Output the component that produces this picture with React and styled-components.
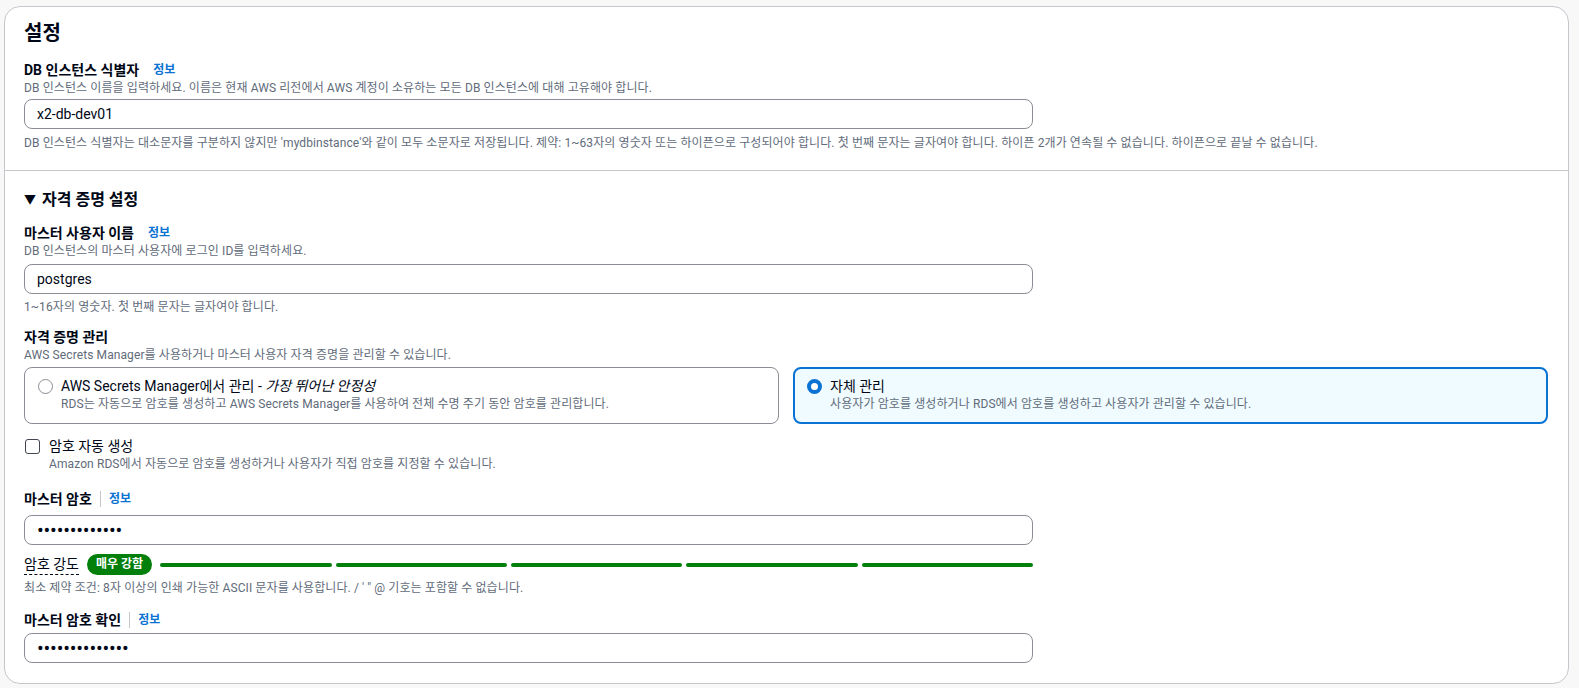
import styled, { createGlobalStyle } from 'styled-components';

const GlobalStyle = createGlobalStyle`
  html, body {
    overflow: hidden;
  }
  body {
    margin: 0;
    background: #f8f8f8;
    font-family: Roboto, "Noto Sans CJK KR", sans-serif;
    color: #000716;
  }
`;

const Page = styled.div`
  padding: 6px 10px 0 4px;
`;

const Card = styled.div`
  background: #fff;
  border: 1px solid #c6c6cd;
  border-radius: 16px;
`;

const Section = styled.div`
  padding: ${(p) => p.pad};
  border-top: ${(p) => (p.divided ? '1px solid #c6c6cd' : 'none')};
  display: flex;
  flex-direction: column;
`;

const Title = styled.h2`
  margin: 0 0 15px;
  font-size: 20px;
  line-height: 24px;
  font-weight: 700;
`;

const Expander = styled.h3`
  margin: 0 0 13px;
  font-size: 16px;
  line-height: 20px;
  font-weight: 700;
  display: flex;
  align-items: center;
  gap: 6px;
`;

const Caret = styled.span`
  font-size: 12px;
`;

const Field = styled.div`
  display: flex;
  flex-direction: column;
  margin-bottom: ${(p) => p.gap || 0}px;
`;

const Label = styled.div`
  display: flex;
  align-items: center;
  font-size: 14px;
  line-height: 20px;
  font-weight: 700;
`;

const Info = styled.a`
  color: #0972d3;
  font-size: 12px;
  font-weight: 700;
  margin-left: ${(p) => (p.tight ? 0 : 14)}px;
  cursor: pointer;
`;

const Sep = styled.span`
  width: 1px;
  height: 16px;
  background: #c6c6cd;
  margin: 0 8px;
`;

const Desc = styled.div`
  font-size: 12px;
  line-height: 16px;
  letter-spacing: 0.1px;
  color: #5f6b7a;
`;

const Input = styled.input`
  box-sizing: border-box;
  width: 1009px;
  height: 30px;
  margin-top: ${(p) => p.top || 4}px;
  padding: 0 12px;
  border: 1px solid #8c8c94;
  border-radius: 8px;
  font-family: inherit;
  font-size: ${(p) => (p.type === 'password' ? '20px' : '14px')};
  letter-spacing: ${(p) => (p.type === 'password' ? '-0.2px' : 'normal')};
  color: #000716;
  background: #fff;
  outline: none;
`;

const Hint = styled(Desc)`
  margin-top: ${(p) => p.top || 5}px;
`;

const Choices = styled.div`
  display: grid;
  grid-template-columns: 1fr 1fr;
  gap: 14px;
  margin-top: 4px;
  margin-bottom: 12px;
`;

const Choice = styled.label`
  box-sizing: border-box;
  height: 57px;
  display: flex;
  gap: 8px;
  border-radius: 8px;
  border: ${(p) => (p.checked ? '2px solid #0972d3' : '1px solid #8c8c94')};
  background: ${(p) => (p.checked ? '#f0fbff' : '#fff')};
  padding: ${(p) => (p.checked ? '7px 12px' : '8px 13px')};
`;

const Radio = styled.span`
  flex: none;
  box-sizing: border-box;
  width: 15px;
  height: 15px;
  margin-top: 3px;
  border-radius: 50%;
  border: ${(p) => (p.checked ? '4px solid #0972d3' : '1.5px solid #8c8c94')};
  background: #fff;
`;

const ChoiceText = styled.div`
  display: flex;
  flex-direction: column;
`;

const ChoiceTitle = styled.div`
  font-size: 14px;
  line-height: 20px;
  em {
    font-style: italic;
  }
`;

const CheckRow = styled.label`
  display: flex;
  gap: 9px;
  margin-bottom: 17px;
`;

const Box = styled.span`
  flex: none;
  box-sizing: border-box;
  width: 15px;
  height: 15px;
  margin: 3px 0 0 1px;
  border: 1.5px solid #424650;
  border-radius: 3px;
`;

const Strength = styled.div`
  display: flex;
  align-items: center;
  gap: 8px;
  width: 1009px;
  margin-top: 9px;
`;

const StrengthLabel = styled.span`
  font-size: 14px;
  line-height: 20px;
  border-bottom: 1px dashed #000716;
`;

const Badge = styled.span`
  background: #037f0c;
  color: #fff;
  font-size: 12px;
  font-weight: 700;
  line-height: 21px;
  padding: 0 9px;
  border-radius: 11px;
`;

const Bars = styled.div`
  flex: 1;
  display: flex;
  gap: 4px;
`;

const Bar = styled.span`
  flex: 1;
  height: 4px;
  border-radius: 2px;
  background: #037f0c;
`;

export default function App() {
  return (
    <Page>
      <GlobalStyle />
      <Card>
        <Section pad="14px 20px 19px 19px">
          <Title>설정</Title>
          <Field>
            <Label>
              DB 인스턴스 식별자<Info>정보</Info>
            </Label>
            <Desc>DB 인스턴스 이름을 입력하세요. 이름은 현재 AWS 리전에서 AWS 계정이 소유하는 모든 DB 인스턴스에 대해 고유해야 합니다.</Desc>
            <Input top={3} defaultValue="x2-db-dev01" />
            <Hint top={6}>
              DB 인스턴스 식별자는 대소문자를 구분하지 않지만 'mydbinstance'와 같이 모두 소문자로 저장됩니다. 제약: 1~63자의 영숫자 또는 하이픈으로 구성되어야 합니다. 첫 번째 문자는 글자여야 합니다. 하이픈 2개가 연속될 수 없습니다. 하이픈으로 끝날 수 없습니다.
            </Hint>
          </Field>
        </Section>
        <Section divided pad="19px 20px 20px 19px">
          <Expander>
            <Caret>▼</Caret>자격 증명 설정
          </Expander>
          <Field gap={12}>
            <Label>
              마스터 사용자 이름<Info>정보</Info>
            </Label>
            <Desc>DB 인스턴스의 마스터 사용자에 로그인 ID를 입력하세요.</Desc>
            <Input top={5} defaultValue="postgres" />
            <Hint>1~16자의 영숫자. 첫 번째 문자는 글자여야 합니다.</Hint>
          </Field>
          <Field>
            <Label>자격 증명 관리</Label>
            <Desc>AWS Secrets Manager를 사용하거나 마스터 사용자 자격 증명을 관리할 수 있습니다.</Desc>
          </Field>
          <Choices>
            <Choice>
              <Radio />
              <ChoiceText>
                <ChoiceTitle>
                  AWS Secrets Manager에서 관리 - <em>가장 뛰어난 안정성</em>
                </ChoiceTitle>
                <Desc>RDS는 자동으로 암호를 생성하고 AWS Secrets Manager를 사용하여 전체 수명 주기 동안 암호를 관리합니다.</Desc>
              </ChoiceText>
            </Choice>
            <Choice checked>
              <Radio checked />
              <ChoiceText>
                <ChoiceTitle>자체 관리</ChoiceTitle>
                <Desc>사용자가 암호를 생성하거나 RDS에서 암호를 생성하고 사용자가 관리할 수 있습니다.</Desc>
              </ChoiceText>
            </Choice>
          </Choices>
          <CheckRow>
            <Box />
            <ChoiceText>
              <ChoiceTitle>암호 자동 생성</ChoiceTitle>
              <Desc>Amazon RDS에서 자동으로 암호를 생성하거나 사용자가 직접 암호를 지정할 수 있습니다.</Desc>
            </ChoiceText>
          </CheckRow>
          <Field gap={14}>
            <Label>
              마스터 암호<Sep />
              <Info tight>정보</Info>
            </Label>
            <Input top={6} type="password" defaultValue="xxxxxxxxxxxxx" />
            <Strength>
              <StrengthLabel>암호 강도</StrengthLabel>
              <Badge>매우 강함</Badge>
              <Bars>
                <Bar />
                <Bar />
                <Bar />
                <Bar />
                <Bar />
              </Bars>
            </Strength>
            <Hint top={5}>최소 제약 조건: 8자 이상의 인쇄 가능한 ASCII 문자를 사용합니다. / ' " @ 기호는 포함할 수 없습니다.</Hint>
          </Field>
          <Field>
            <Label>
              마스터 암호 확인<Sep />
              <Info tight>정보</Info>
            </Label>
            <Input top={3} type="password" defaultValue="xxxxxxxxxxxxxx" />
          </Field>
        </Section>
      </Card>
    </Page>
  );
}
